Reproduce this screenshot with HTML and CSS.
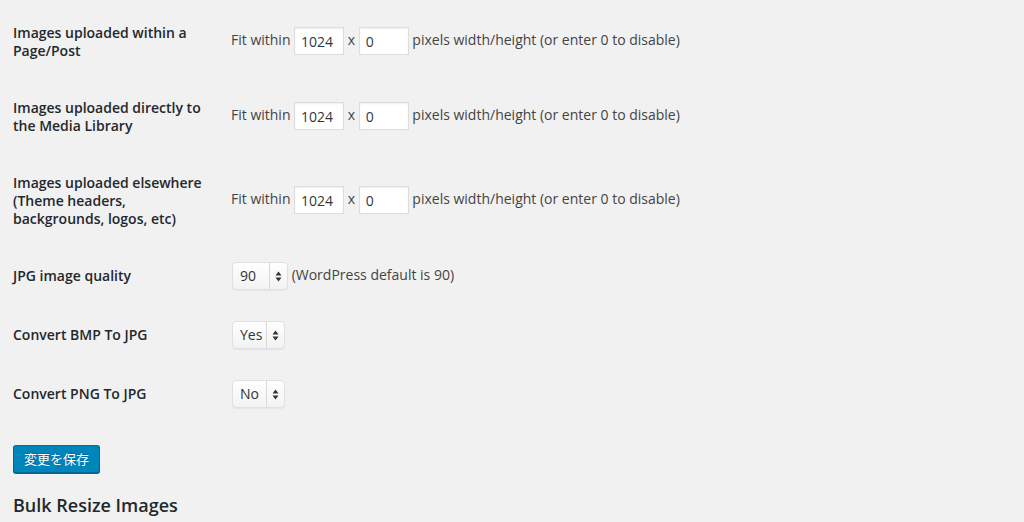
FILE: index.html
```html
<!DOCTYPE html>
<html>
<head>
<meta charset="utf-8">
<link rel="stylesheet" href="styles.css">
</head>
<body>
<div class="wrap">
  <table class="form-table">
    <tr>
      <th>Images uploaded within a Page/Post</th>
      <td>Fit within <input class="small-text" type="text" value="1024"> x <input class="small-text" type="text" value="0"> pixels width/height (or enter 0 to disable)</td>
    </tr>
    <tr>
      <th>Images uploaded directly to the Media Library</th>
      <td>Fit within <input class="small-text" type="text" value="1024"> x <input class="small-text" type="text" value="0"> pixels width/height (or enter 0 to disable)</td>
    </tr>
    <tr>
      <th>Images uploaded elsewhere (Theme headers, backgrounds, logos, etc)</th>
      <td>Fit within <input class="small-text" type="text" value="1024"> x <input class="small-text" type="text" value="0"> pixels width/height (or enter 0 to disable)</td>
    </tr>
    <tr>
      <th>JPG image quality</th>
      <td><span class="select sel-q"><span class="sel-val">90</span><span class="sel-arrows"><svg width="7" height="11" viewBox="0 0 7 11"><path d="M3.5 0.5 L6.5 4.5 L0.5 4.5 Z M3.5 10.5 L6.5 6.5 L0.5 6.5 Z" fill="#333"/></svg></span></span> (WordPress default is 90)</td>
    </tr>
    <tr>
      <th>Convert BMP To JPG</th>
      <td><span class="select sel-yn"><span class="sel-val">Yes</span><span class="sel-arrows"><svg width="7" height="11" viewBox="0 0 7 11"><path d="M3.5 0.5 L6.5 4.5 L0.5 4.5 Z M3.5 10.5 L6.5 6.5 L0.5 6.5 Z" fill="#333"/></svg></span></span></td>
    </tr>
    <tr>
      <th>Convert PNG To JPG</th>
      <td><span class="select sel-yn"><span class="sel-val">No</span><span class="sel-arrows"><svg width="7" height="11" viewBox="0 0 7 11"><path d="M3.5 0.5 L6.5 4.5 L0.5 4.5 Z M3.5 10.5 L6.5 6.5 L0.5 6.5 Z" fill="#333"/></svg></span></span></td>
    </tr>
  </table>
  <p class="submit"><button class="button-primary" type="button">変更を保存</button></p>
  <h2 class="title">Bulk Resize Images</h2>
</div>
</body>
</html>
```
FILE: styles.css
```css
html, body {
  margin: 0;
  padding: 0;
  background: #f1f1f1;
}
body {
  font-family: "Open Sans", "Noto Sans CJK JP", sans-serif;
  font-size: 14px;
  color: #444;
  width: 1024px;
  height: 522px;
  overflow: hidden;
}
.wrap {
  padding: 4px 0 0 13px;
}
.form-table {
  border-collapse: collapse;
  border-spacing: 0;
}
.form-table th {
  width: 200px;
  padding: 20px 10px 19px 0;
  text-align: left;
  vertical-align: top;
  font-weight: 600;
  line-height: 18px;
  color: #23282d;
}
.form-table td {
  padding: 15px 10px 16px 8px;
  line-height: 18px;
  vertical-align: middle;
}
.small-text {
  width: 50px;
  height: 28px;
  box-sizing: border-box;
  padding: 3px 6px;
  border: 1px solid #ddd;
  background: #fff;
  box-shadow: inset 0 1px 2px rgba(0,0,0,.07);
  font-family: "Open Sans", sans-serif;
  font-size: 14px;
  color: #32373c;
  margin: 0;
  vertical-align: middle;
  outline: none;
}
.select {
  display: inline-flex;
  align-items: stretch;
  height: 28px;
  box-sizing: border-box;
  border: 1px solid #e0e0e0;
  border-radius: 4px;
  background: linear-gradient(#fefefe, #f3f3f3);
  box-shadow: 0 1px 1px rgba(0,0,0,.05);
  vertical-align: middle;
  color: #333;
  margin-left: 1px;
}
.sel-val {
  display: flex;
  align-items: center;
  padding: 0 5px 0 7px;
  border-right: 1px solid #d8d8d8;
}
.sel-yn .sel-val {
  width: 21px;
}
.sel-q .sel-val {
  width: 22px;
  padding-right: 7px;
}
.sel-arrows {
  display: flex;
  align-items: center;
  justify-content: center;
  width: 17px;
}
.submit {
  margin: 21px 0 0 0;
  padding: 0;
}
.button-primary {
  height: 28px;
  padding: 0 10px 1px;
  border: 1px solid;
  border-color: #0073aa #006799 #006799;
  border-radius: 3px;
  background: #0085ba;
  box-shadow: 0 1px 0 #006799;
  color: #fff;
  font-family: "Noto Sans CJK JP", sans-serif;
  font-size: 13px;
  line-height: 26px;
  text-shadow: 0 -1px 1px #006799;
  cursor: pointer;
}
.title {
  margin: 20px 0 0 0;
  font-size: 18px;
  font-weight: 600;
  line-height: 24px;
  color: #23282d;
}
```
